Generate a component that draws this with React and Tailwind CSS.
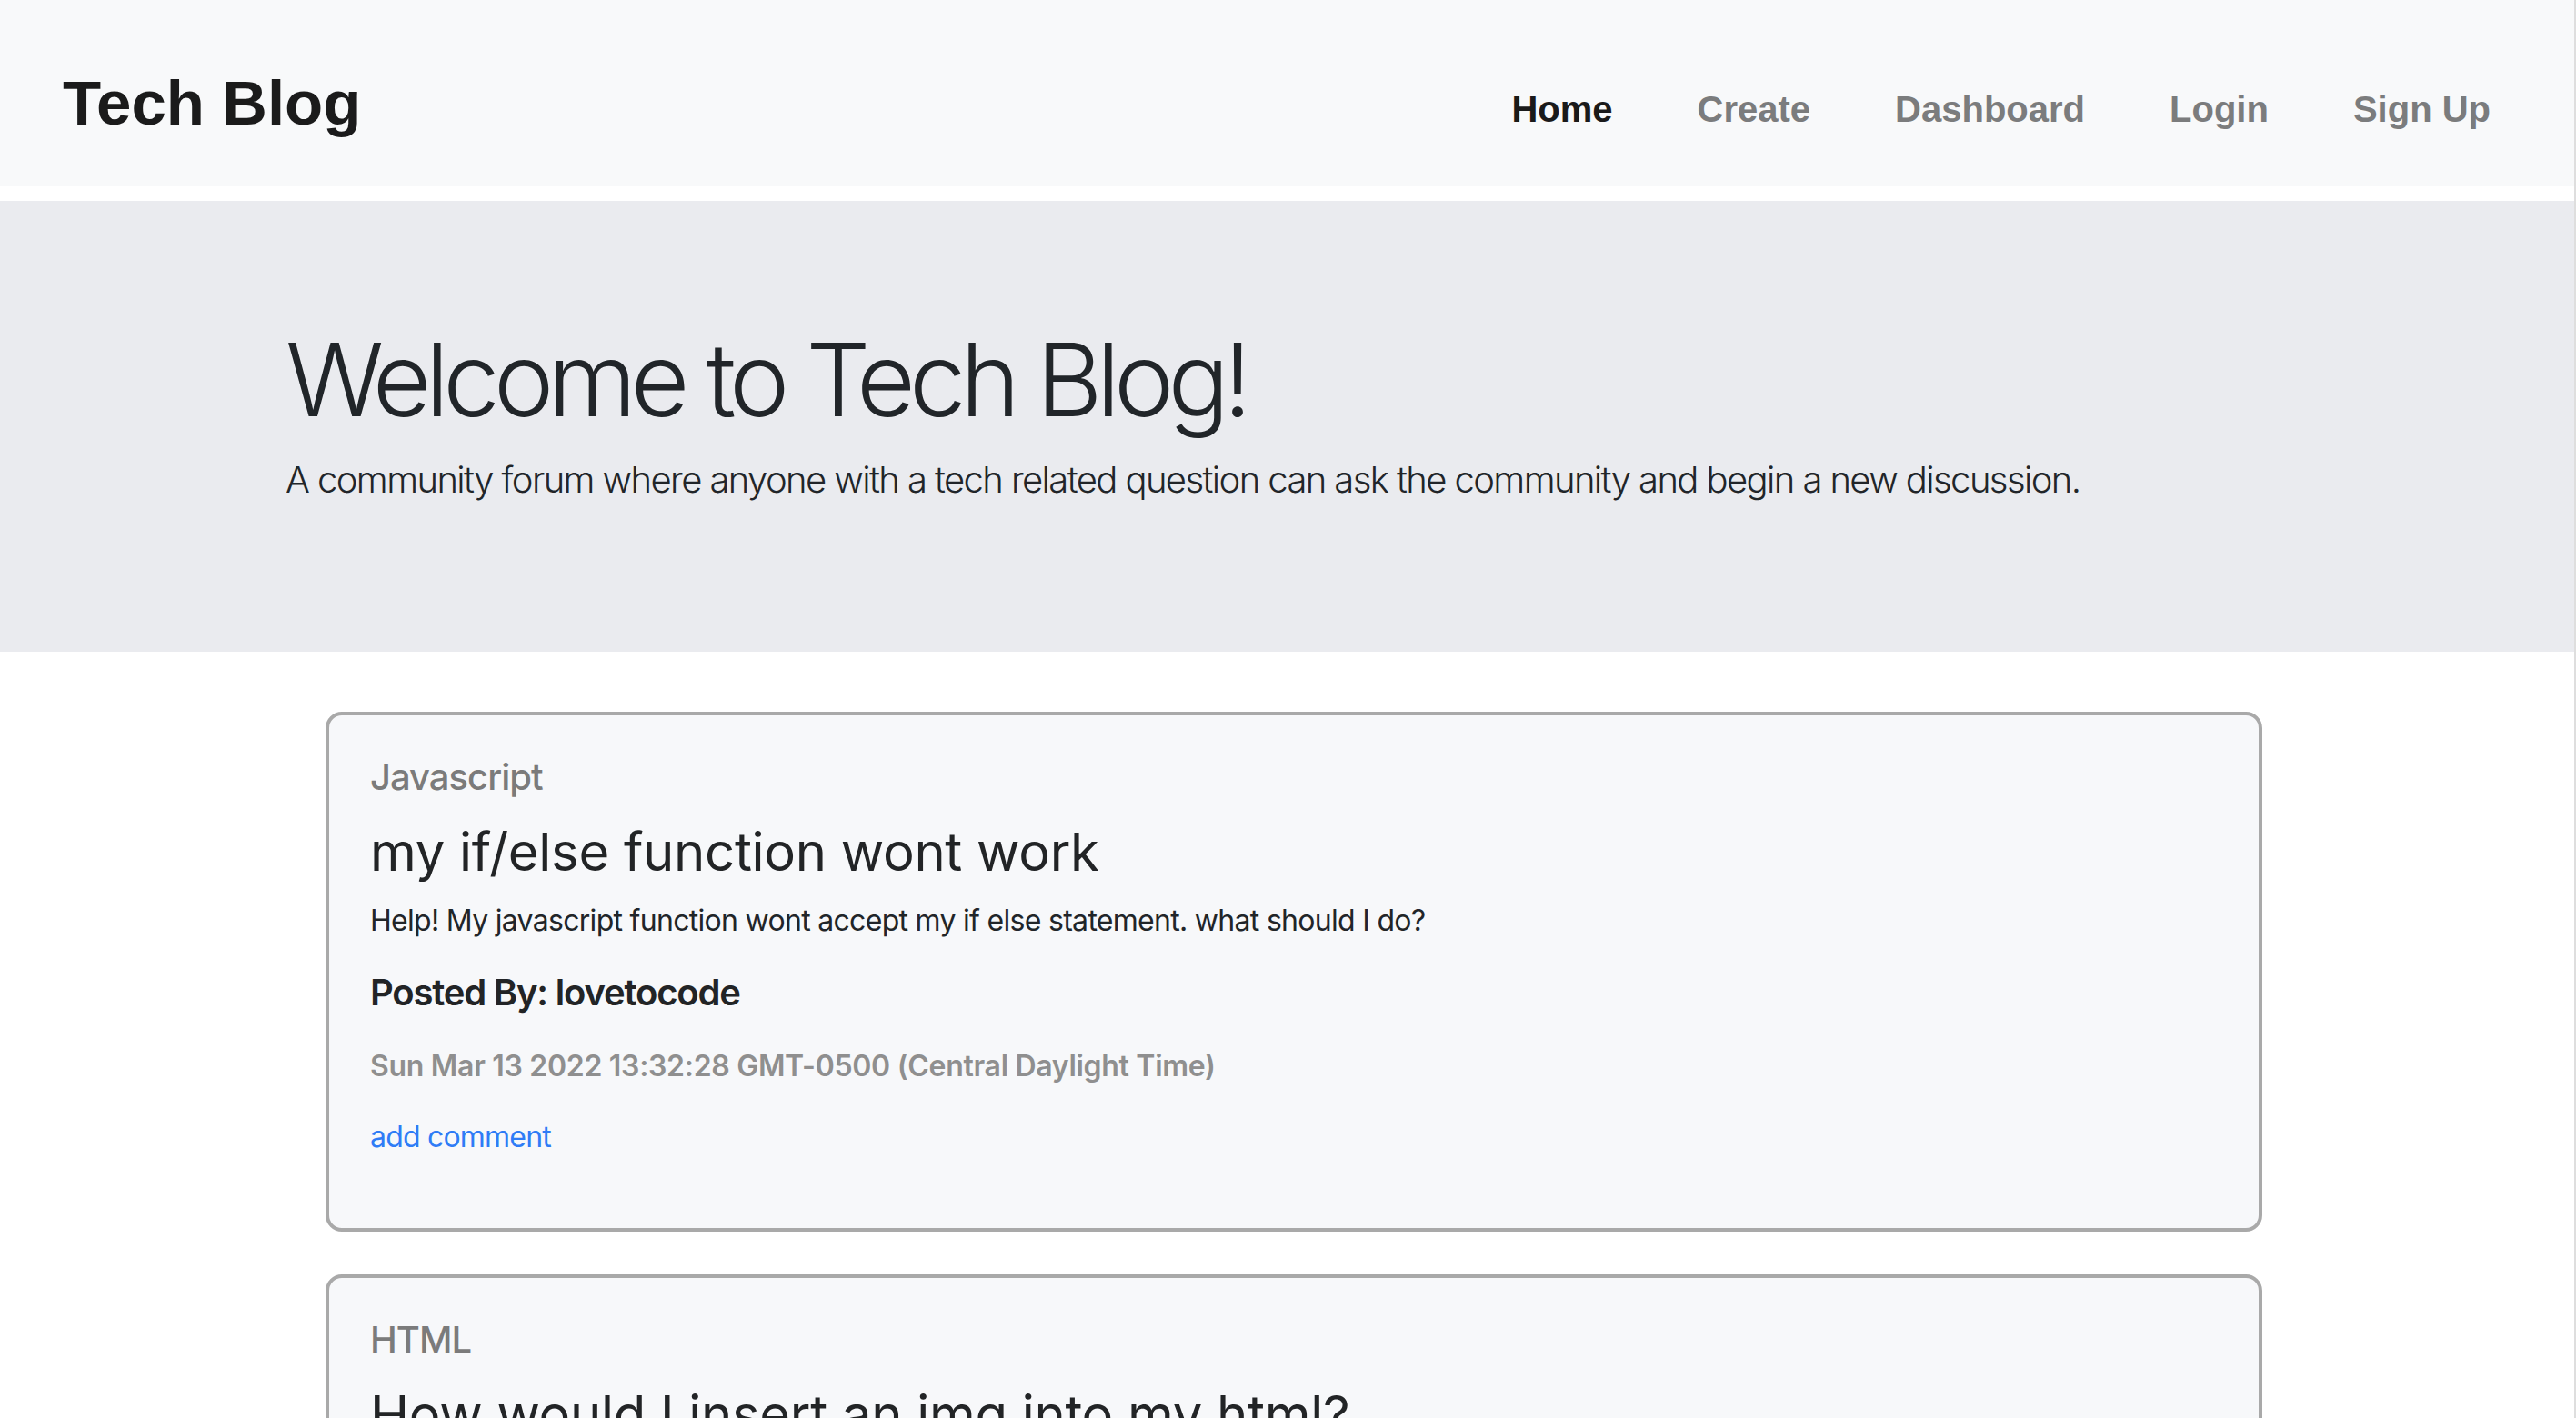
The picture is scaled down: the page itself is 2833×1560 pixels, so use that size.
import React from 'react'

const posts = [
  {
    topic: 'Javascript',
    title: 'my if/else function wont work',
    body: 'Help! My javascript function wont accept my if else statement. what should I do?',
    author: 'lovetocode',
    date: 'Sun Mar 13 2022 13:32:28 GMT-0500 (Central Daylight Time)',
  },
  {
    topic: 'HTML',
    title: 'How would I insert an img into my html?',
    body: 'I have tried a few different ways but my picture will not show up on the page.',
    author: 'webnewbie',
    date: 'Sun Mar 13 2022 14:05:11 GMT-0500 (Central Daylight Time)',
  },
]

const links = ['Home', 'Create', 'Dashboard', 'Login', 'Sign Up']

const PostCard = ({ post }) => (
  <div className="rounded-[18px] border-4 border-[#a9a9a9] bg-[#f7f8fa] pt-[48px] pb-[84px] pl-[45px] pr-[45px]">
    <h5 className="text-[40px] leading-none font-medium tracking-[-1px] text-[#7b7b7b]">{post.topic}</h5>
    <h3 className="mt-[33px] text-[58px] leading-none font-normal tracking-[-0.3px] text-[#222426]">{post.title}</h3>
    <p className="mt-[31px] text-[32px] leading-none tracking-[-0.7px] text-[#212529]">{post.body}</p>
    <p className="mt-[43px] text-[40px] leading-none font-semibold tracking-[-1.2px] text-[#222426]">Posted By: {post.author}</p>
    <p className="mt-[45px] text-[32px] leading-none font-semibold tracking-[-0.3px] text-[#8f8f8f]">{post.date}</p>
    <a href="#" className="mt-[46px] block text-[32px] leading-none tracking-[-0.8px] text-[#2f7cf6]">add comment</a>
  </div>
)

export default function App() {
  return (
    <div className="min-h-screen bg-white border-r-2 border-[#dedede] font-['Inter',sans-serif] text-[#212529]">
      {/* Navbar */}
      <header className="h-[205px] bg-[#f8f9fa] flex items-start justify-between pl-[69px] pr-[92px] font-['Liberation_Sans',Arial,sans-serif]">
        <div className="pt-[79px] text-[69px] leading-none font-bold text-[#1b1b1b]">Tech Blog</div>
        <nav className="pt-[100px] flex gap-[93px] text-[40px] leading-none font-bold">
          {links.map((link, i) => (
            <a key={link} href="#" className={i === 0 ? 'text-[#1a1a1a]' : 'text-[#7b7c7d]'}>
              {link}
            </a>
          ))}
        </nav>
      </header>

      {/* Jumbotron */}
      <section className="mt-[16px] h-[496px] bg-[#eaebef] pl-[314px] pt-[140px]">
        <h1 className="text-[112px] leading-none font-light tracking-[-6.8px] text-[#212529]">Welcome to Tech Blog!</h1>
        <p className="mt-[35px] text-[40px] leading-none font-light tracking-[-1.6px] text-[#212529]">
          A community forum where anyone with a tech related question can ask the community and begin a new discussion.
        </p>
      </section>

      {/* Posts */}
      <main className="ml-[358px] w-[2130px] mt-[66px] flex flex-col gap-[47px] pb-[60px]">
        {posts.map((post, i) => (
          <PostCard key={i} post={post} />
        ))}
      </main>
    </div>
  )
}
